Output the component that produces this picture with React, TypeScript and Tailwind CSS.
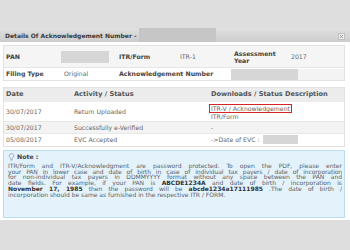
import { X } from "lucide-react";

const font = { fontFamily: '"DejaVu Sans", Verdana, sans-serif' };

function Redact({ className }: { className: string }) {
  return <div className={`bg-[#d6d6d6] ${className}`} />;
}

export default function App() {
  return (
    <div className="w-[350px] h-[250px] overflow-hidden bg-[#dedede] flex flex-col" style={font}>
      <div className="h-[28px] shrink-0" />

      {/* header */}
      <div className="h-[14px] shrink-0 flex items-stretch bg-gradient-to-b from-[#e0e0e0] to-[#cdcdcd]">
        <div className="pl-[5px] pr-[3px] flex items-center text-[6px] font-bold text-[#3a3a3a] whitespace-nowrap">
          Details Of Acknowledgement Number -
        </div>
        <div className="w-[77px] bg-[#c6c6c6]" />
        <div className="flex-1 flex items-end justify-end pr-[5px] pb-[2px]">
          <div className="w-[7px] h-[7px] flex items-center justify-center bg-[#ececec] border border-[#c0c0c0]">
            <X className="w-[5px] h-[5px] text-[#777]" strokeWidth={3} />
          </div>
        </div>
      </div>

      <div className="bg-white h-[178px] shrink-0 pt-[3px] px-[3px] flex flex-col">
        {/* summary table */}
        <div className="border border-[#e2e2e2] text-[6.2px] text-[#666] mr-[2px]">
          <div className="grid grid-cols-[55px_60px_59px_56px_57px_1fr] h-[22px] items-center bg-[#f5f5f5] border-b border-[#e6e6e6]">
            <span className="pl-[2px] font-bold text-[#444]">PAN</span>
            <div className="flex items-center"><Redact className="ml-[2px] w-[48px] h-[12px]" /></div>
            <span className="font-bold text-[#444]">ITR/Form</span>
            <span className="pl-[2px]">ITR-1</span>
            <span className="font-bold text-[#444] leading-[7px]">Assessment<br />Year</span>
            <span>2017</span>
          </div>
          <div className="grid grid-cols-[55px_60px_112px_67px_1fr] h-[12px] items-center">
            <span className="pl-[2px] font-bold text-[#444]">Filing Type</span>
            <span className="pl-[5px]">Original</span>
            <span className="font-bold text-[#444]">Acknowledgement Number</span>
            <Redact className="h-[11px]" />
            <div className="h-[11px] bg-[#f3f3f3]" />
          </div>
        </div>

        {/* activity table */}
        <div className="mt-[6px] border border-[#e2e2e2] text-[6.2px] text-[#666] mr-[2px]">
          <div className="grid grid-cols-[68px_137px_1fr] h-[14px] items-center bg-[#ececec] font-bold text-[#555] text-[6.6px]">
            <span className="pl-[2px]">Date</span>
            <span className="pl-[2px]">Activity / Status</span>
            <span className="pl-[2px]">Downloads / Status Description</span>
          </div>
          <div className="grid grid-cols-[68px_137px_1fr] h-[20px] items-center border-b border-[#e8e8e8]">
            <span className="pl-[2px]">30/07/2017</span>
            <span className="pl-[2px]">Return Uploaded</span>
            <div className="flex flex-col items-start leading-[7px]">
              <span className="border border-[#d42424] px-[1px]">ITR-V / Acknowledgement</span>
              <span className="pl-[2px]">ITR/Form</span>
            </div>
          </div>
          <div className="grid grid-cols-[68px_137px_1fr] h-[12px] items-center bg-[#f3f3f3] border-b border-[#e8e8e8]">
            <span className="pl-[2px]">30/07/2017</span>
            <span className="pl-[2px]">Successfully e-Verified</span>
            <span className="pl-[2px]">-</span>
          </div>
          <div className="grid grid-cols-[68px_137px_1fr] h-[12px] items-center">
            <span className="pl-[2px]">05/08/2017</span>
            <span className="pl-[2px]">EVC Accepted</span>
            <div className="flex items-center pl-[2px]">
              <span>-&gt;Date of EVC :</span>
              <Redact className="ml-[3px] w-[35px] h-[9px]" />
            </div>
          </div>
        </div>

        {/* note */}
        <div className="mt-[3px] mr-[2px] h-[68px] bg-[#e3f2fb] border border-[#bcdcf0] pl-[4px] pr-[2px] pt-[2px] text-[6px] leading-[5.7px] text-[#56626c]">
          <div className="flex items-center gap-[2px] mb-[2px]">
            <svg viewBox="0 0 12 14" className="w-[7px] h-[8px]" fill="none" stroke="#8a9aa6" strokeWidth="1.2">
              <path d="M6 1a4 4 0 0 0-2.4 7.2c.5.4.8 1 .8 1.6V11h3.2V9.8c0-.6.3-1.2.8-1.6A4 4 0 0 0 6 1z" />
              <path d="M4.6 12.5h2.8" />
            </svg>
            <span className="font-bold text-[#3b4650] text-[6.2px]">Note :</span>
          </div>
          <div className="whitespace-nowrap text-justify [text-align-last:justify]">ITR/Form and ITR-V/Acknowledgment are password protected. To open the PDF, please enter</div>
          <div className="whitespace-nowrap text-justify [text-align-last:justify] tracking-[-0.1px]">your PAN in lower case and date of birth in case of individual tax payers / date of incorporation</div>
          <div className="whitespace-nowrap text-justify [text-align-last:justify]">for non-individual tax payers in DDMMYYYY format without any space between the PAN and</div>
          <div className="whitespace-nowrap text-justify [text-align-last:justify]">date fields. For example, if your PAN is <b className="text-[#333]">ABCDE1234A</b> and date of birth / incorporation is</div>
          <div className="whitespace-nowrap text-justify [text-align-last:justify]"><b className="text-[#333]">November 17, 1985</b> then the password will be <b className="text-[#333]">abcde1234a17111985</b> .The date of birth /</div>
          <div className="whitespace-nowrap">incorporation should be same as furnished in the respective ITR / FORM.</div>
        </div>
      </div>
    </div>
  );
}
